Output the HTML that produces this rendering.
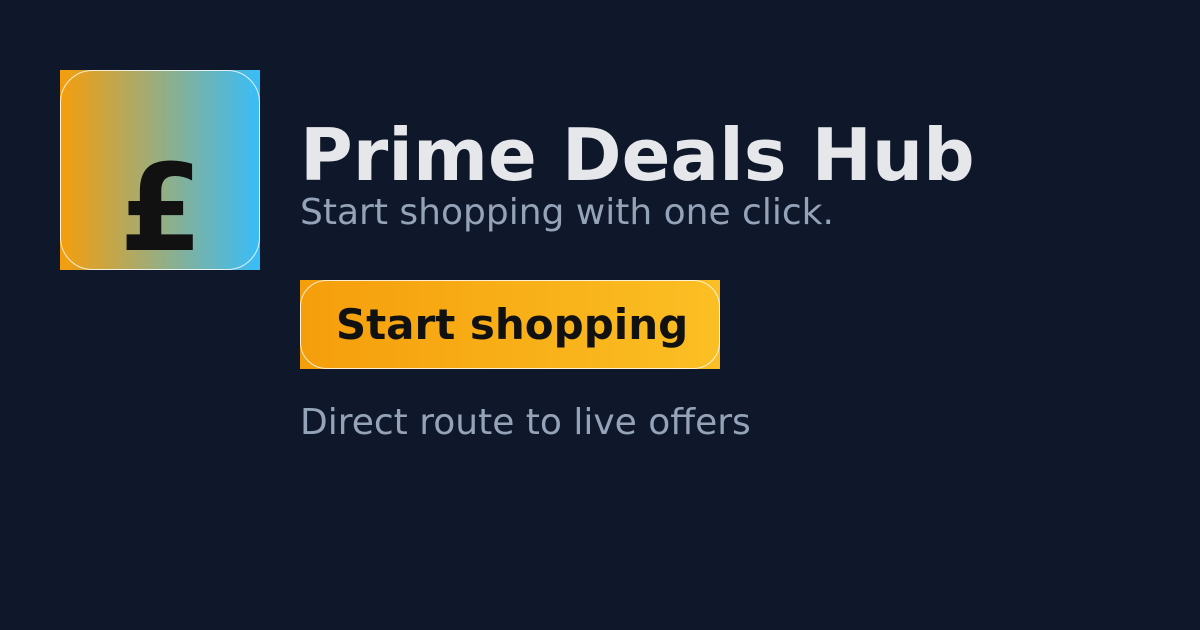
<!DOCTYPE html>
<html><head><meta charset="utf-8"><style>
html,body{margin:0;padding:0;background:#0f172a;}
svg{display:block}
</style></head><body>
<svg width="1200" height="630" viewBox="0 0 1200 630" xmlns="http://www.w3.org/2000/svg">
<defs>
<linearGradient id="g1" x1="0" x2="1" y1="0" y2="0"><stop offset="0" stop-color="#f59e0b"/><stop offset="1" stop-color="#38bdf8"/></linearGradient>
<linearGradient id="g2" x1="0" x2="1" y1="0" y2="0"><stop offset="0" stop-color="#f59e0b"/><stop offset="1" stop-color="#fbbf24"/></linearGradient>
</defs>
<rect width="1200" height="630" fill="#0f172a"/>
<rect x="60" y="70" width="200" height="200" fill="url(#g1)"/>
<rect x="60.5" y="70.5" width="199" height="199" rx="32" fill="none" stroke="#ffffff" stroke-opacity="0.8" stroke-width="1"/>
<text x="161" y="250" text-anchor="middle" font-family="DejaVu Sans, sans-serif" font-weight="bold" font-size="120" fill="#111111">£</text>
<text x="300" y="180" font-family="DejaVu Sans, sans-serif" font-weight="bold" font-size="72" fill="#e5e7eb">Prime Deals Hub</text>
<text x="300" y="224" font-family="DejaVu Sans, sans-serif" font-size="36" fill="#94a3b8">Start shopping with one click.</text>
<rect x="300" y="280" width="420" height="89" fill="url(#g2)"/>
<rect x="300.5" y="280.5" width="419" height="88" rx="26" fill="none" stroke="#ffffff" stroke-opacity="0.8" stroke-width="1"/>
<text x="512" y="339" text-anchor="middle" font-family="DejaVu Sans, sans-serif" font-weight="bold" font-size="42" fill="#111111">Start shopping</text>
<text x="300" y="434" font-family="DejaVu Sans, sans-serif" font-size="36" fill="#94a3b8">Direct route to live offers</text>
</svg>
</body></html>
